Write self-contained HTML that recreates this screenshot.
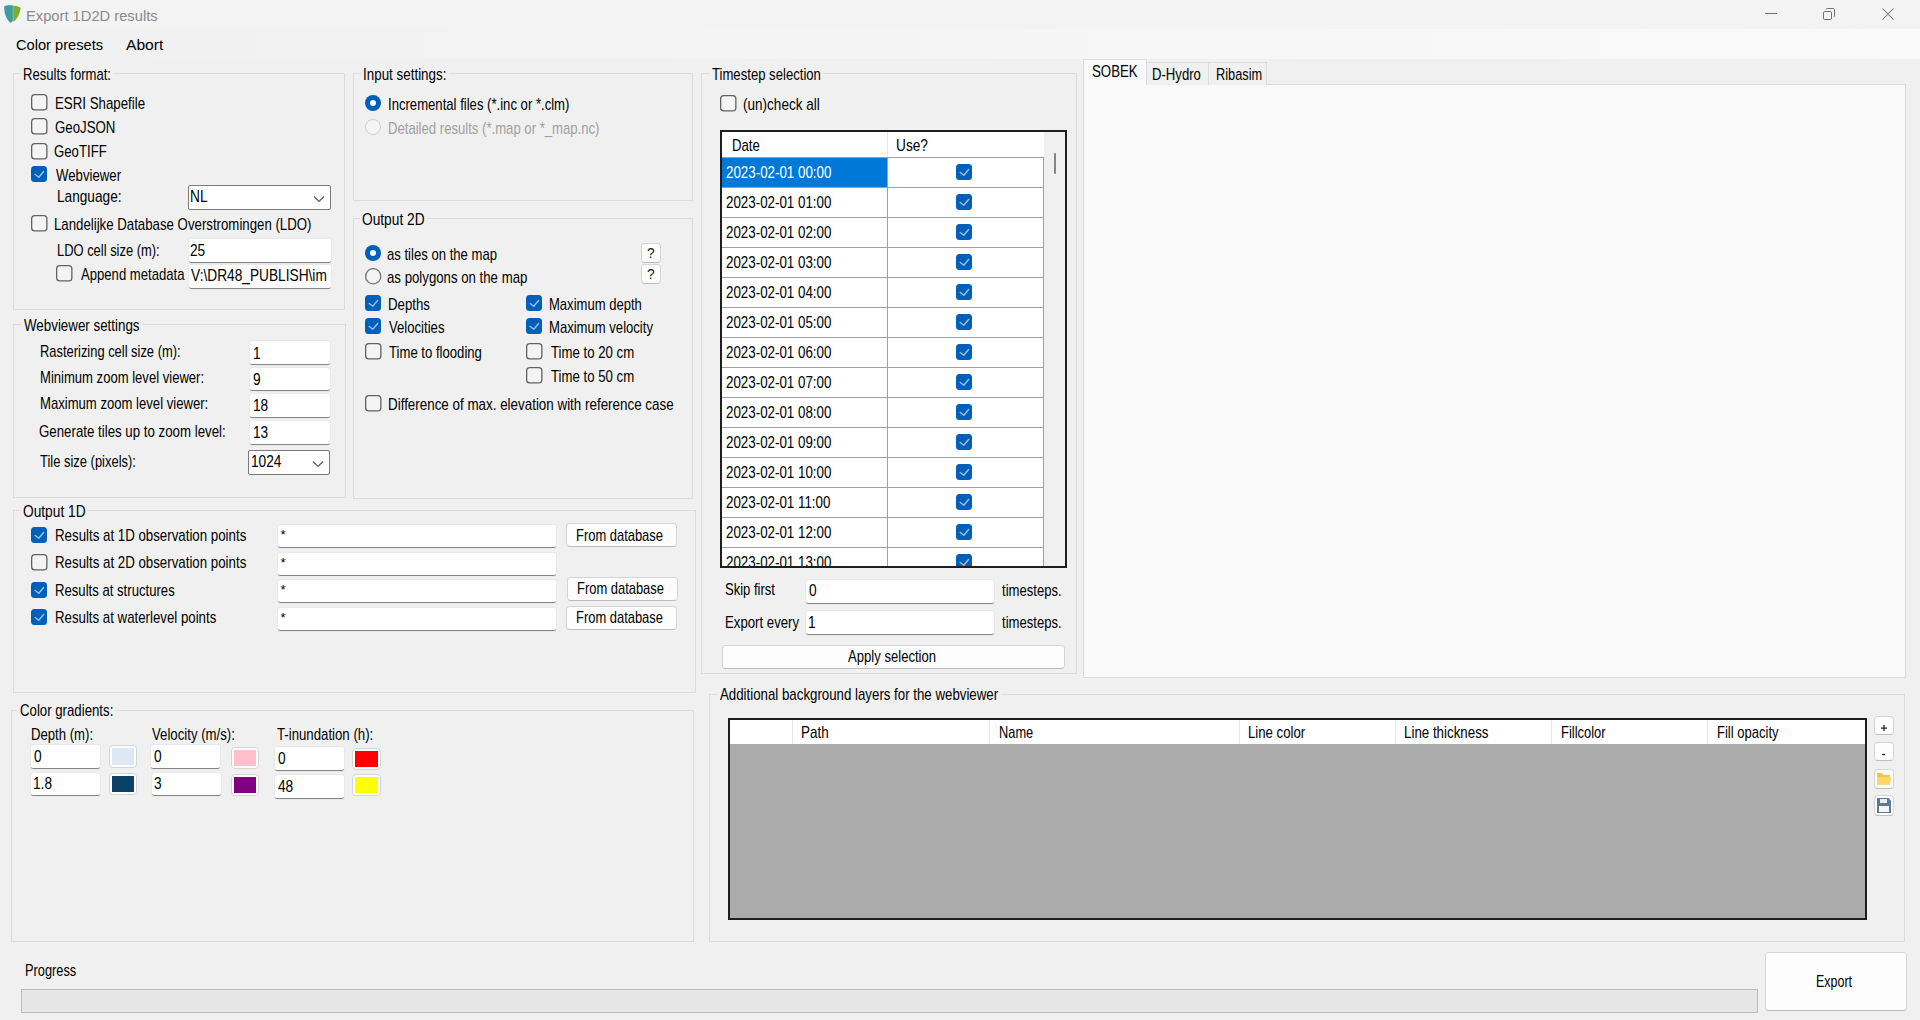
<!DOCTYPE html>
<html><head><meta charset="utf-8"><title>Export 1D2D results</title>
<style>
html,body{margin:0;padding:0;width:1920px;height:1020px;overflow:hidden;background:#f0f0f0;font-family:"Liberation Sans",sans-serif;}
div,svg{position:absolute;}
.t{font-size:15.75px;line-height:17px;white-space:pre;transform-origin:0 0;color:#000;}
</style></head><body>
<div style="left:0px;top:0px;width:1920px;height:29px;background:#f3f3f3"></div>
<div style="left:0px;top:29px;width:1920px;height:30px;background:linear-gradient(to right,#f0f0f0,#fafafa)"></div>
<svg width="20" height="20" viewBox="0 0 20 20" style="position:absolute;left:2px;top:4px">
<path d="M2.2 2.2 C4.5 1.4 8 1.2 10.9 1.5 L10.9 16.5 C10.4 17.6 9.4 18.8 8.5 18.8 C7.5 18.4 4.5 14.5 3.2 10.5 C2.4 8 2.1 4.5 2.2 2.2 Z" fill="#3f9c9e"/>
<path d="M11.2 1.5 C13.8 1.8 16.6 2.5 18.6 3.8 C18.4 7.5 16.8 12 13.6 16 C12.8 17 11.8 17.6 11.2 17.4 Z" fill="#7aae2c"/>
</svg>
<div class="t" style="left:26.35px;top:6.50px;font-size:15.5px;color:#8a8a8a;transform:scaleX(0.9489);">Export 1D2D results</div>
<div style="left:1765px;top:13px;width:12px;height:1px;background:#707070"></div>
<svg width="16" height="16" viewBox="0 0 16 16" style="position:absolute;left:1821px;top:6px">
<rect x="2.5" y="5.5" width="8" height="8" rx="1.3" fill="none" stroke="#707070" stroke-width="1"/>
<path d="M5 3.2 C5.2 2.8 5.6 2.5 6.2 2.5 L12 2.5 C12.9 2.5 13.5 3.1 13.5 4 L13.5 9.8 C13.5 10.4 13.2 10.8 12.8 11" fill="none" stroke="#707070" stroke-width="1"/>
</svg>
<svg width="16" height="16" viewBox="0 0 16 16" style="position:absolute;left:1880px;top:6px">
<path d="M2.5 2.5 L13.5 13.5 M13.5 2.5 L2.5 13.5" stroke="#707070" stroke-width="1.05"/>
</svg>
<div class="t" style="left:15.72px;top:35.50px;font-size:15px;color:#000;transform:scaleX(0.9761);">Color presets</div>
<div class="t" style="left:126.25px;top:35.50px;font-size:15px;color:#000;transform:scaleX(1.0417);">Abort</div>
<div style="left:13px;top:73px;width:332px;height:237px;border:1px solid #dcdcdc;box-sizing:border-box"></div>
<div style="left:21px;top:72px;width:92px;height:3px;background:#f0f0f0"></div>
<div class="t" style="left:23.17px;top:65.50px;font-size:15.75px;color:#000;transform:scaleX(0.8308);">Results format:</div>
<svg width="17" height="17" viewBox="0 0 17 17" style="left:31px;top:94px"><rect x="0.65" y="0.65" width="15.2" height="15.2" rx="3.2" fill="#f4f4f4" stroke="#616161" stroke-width="1.3"/></svg>
<div class="t" style="left:54.66px;top:94.50px;font-size:15.75px;color:#000;transform:scaleX(0.8429);">ESRI Shapefile</div>
<svg width="17" height="17" viewBox="0 0 17 17" style="left:31px;top:118px"><rect x="0.65" y="0.65" width="15.2" height="15.2" rx="3.2" fill="#f4f4f4" stroke="#616161" stroke-width="1.3"/></svg>
<div class="t" style="left:54.66px;top:118.50px;font-size:15.75px;color:#000;transform:scaleX(0.8414);">GeoJSON</div>
<svg width="17" height="17" viewBox="0 0 17 17" style="left:31px;top:142.5px"><rect x="0.65" y="0.65" width="15.2" height="15.2" rx="3.2" fill="#f4f4f4" stroke="#616161" stroke-width="1.3"/></svg>
<div class="t" style="left:54.16px;top:143.00px;font-size:15.75px;color:#000;transform:scaleX(0.8379);">GeoTIFF</div>
<div style="left:31px;top:166px;width:16px;height:16px;border-radius:3.5px;background:#005fb8"><svg width="16" height="16" viewBox="0 0 16 16" style="position:absolute;left:0;top:0"><path d="M4.2 8.5 L7.8 11.3 L12.6 5.5" fill="none" stroke="#9cbde6" stroke-width="1.45" stroke-linecap="round" stroke-linejoin="round"/></svg></div>
<div class="t" style="left:55.50px;top:166.50px;font-size:15.75px;color:#000;transform:scaleX(0.8379);">Webviewer</div>
<div class="t" style="left:57.43px;top:187.50px;font-size:15.75px;color:#000;transform:scaleX(0.8667);">Language:</div>
<div style="left:188px;top:185px;width:143px;height:25px;background:#fff;border:1px solid #7a7a7a;border-radius:2px;box-sizing:border-box"><svg width="12" height="8" viewBox="0 0 12 8" style="position:absolute;right:5px;top:9px"><path d="M1 1.5 L6 6.5 L11 1.5" fill="none" stroke="#555" stroke-width="1.1"/></svg></div>
<div class="t" style="left:190.13px;top:187.50px;font-size:15.75px;color:#000;transform:scaleX(0.8700);">NL</div>
<svg width="17" height="17" viewBox="0 0 17 17" style="left:31px;top:215px"><rect x="0.65" y="0.65" width="15.2" height="15.2" rx="3.2" fill="#f4f4f4" stroke="#616161" stroke-width="1.3"/></svg>
<div class="t" style="left:54.46px;top:215.50px;font-size:15.75px;color:#000;transform:scaleX(0.8403);">Landelijke Database Overstromingen (LDO)</div>
<div class="t" style="left:57.48px;top:241.50px;font-size:15.75px;color:#000;transform:scaleX(0.8203);">LDO cell size (m):</div>
<div style="left:189px;top:239px;width:142px;height:24px;background:#fff;border-radius:2.5px;border-bottom:1px solid #868686;box-sizing:border-box;box-shadow:0 0 0 1px #e9e9e9"></div>
<div class="t" style="left:190.13px;top:241.50px;font-size:15.75px;color:#000;transform:scaleX(0.8700);">25</div>
<svg width="17" height="17" viewBox="0 0 17 17" style="left:56px;top:265px"><rect x="0.65" y="0.65" width="15.2" height="15.2" rx="3.2" fill="#f4f4f4" stroke="#616161" stroke-width="1.3"/></svg>
<div class="t" style="left:80.70px;top:265.50px;font-size:15.75px;color:#000;transform:scaleX(0.8323);">Append metadata</div>
<div style="left:189px;top:265px;width:142px;height:24px;background:#fff;border-radius:2.5px;border-bottom:1px solid #868686;box-sizing:border-box;box-shadow:0 0 0 1px #e9e9e9"></div>
<div class="t" style="left:190.60px;top:266.50px;font-size:15.75px;color:#000;transform:scaleX(0.8700);">V:\DR48_PUBLISH\im</div>
<div style="left:353px;top:73px;width:340px;height:128px;border:1px solid #dcdcdc;box-sizing:border-box"></div>
<div style="left:361px;top:72px;width:88px;height:3px;background:#f0f0f0"></div>
<div class="t" style="left:363.35px;top:65.50px;font-size:15.75px;color:#000;transform:scaleX(0.8510);">Input settings:</div>
<div style="left:365px;top:95px;width:16px;height:16px;border-radius:50%;background:#005fb8"><div style="left:5px;top:5px;width:6px;height:6px;border-radius:50%;background:#fff"></div></div>
<div class="t" style="left:388.07px;top:95.50px;font-size:15.75px;color:#000;transform:scaleX(0.8324);">Incremental files (*.inc or *.clm)</div>
<div style="left:365px;top:119px;width:16px;height:16px;border-radius:50%;border:1px solid #cfcfcf;box-sizing:border-box;background:#f5f5f5"></div>
<div class="t" style="left:388.07px;top:119.50px;font-size:15.75px;color:#a0a0a0;transform:scaleX(0.8329);">Detailed results (*.map or *_map.nc)</div>
<div style="left:353px;top:218px;width:340px;height:281px;border:1px solid #dcdcdc;box-sizing:border-box"></div>
<div style="left:360px;top:217px;width:67px;height:3px;background:#f0f0f0"></div>
<div class="t" style="left:362.13px;top:210.50px;font-size:15.75px;color:#000;transform:scaleX(0.8714);">Output 2D</div>
<div style="left:365px;top:245px;width:16px;height:16px;border-radius:50%;background:#005fb8"><div style="left:5px;top:5px;width:6px;height:6px;border-radius:50%;background:#fff"></div></div>
<div class="t" style="left:387.37px;top:245.50px;font-size:15.75px;color:#000;transform:scaleX(0.8321);">as tiles on the map</div>
<svg width="17" height="17" viewBox="0 0 17 17" style="left:365px;top:268px"><circle cx="8.25" cy="8.25" r="7.6" fill="#f4f4f4" stroke="#747474" stroke-width="1.35"/></svg>
<div class="t" style="left:387.36px;top:268.50px;font-size:15.75px;color:#000;transform:scaleX(0.8392);">as polygons on the map</div>
<div style="left:641px;top:243px;width:20px;height:20px;background:#fdfdfd;border:1px solid #d5d5d5;border-bottom-color:#bdbdbd;border-radius:4px;box-sizing:border-box"></div>
<div class="t" style="left:646.55px;top:244.50px;font-size:14.5px;color:#1a1a1a;transform:scaleX(0.9500);">?</div>
<div style="left:641px;top:264px;width:20px;height:20px;background:#fdfdfd;border:1px solid #d5d5d5;border-bottom-color:#bdbdbd;border-radius:4px;box-sizing:border-box"></div>
<div class="t" style="left:646.55px;top:265.50px;font-size:14.5px;color:#1a1a1a;transform:scaleX(0.9500);">?</div>
<div style="left:365px;top:295px;width:16px;height:16px;border-radius:3.5px;background:#005fb8"><svg width="16" height="16" viewBox="0 0 16 16" style="position:absolute;left:0;top:0"><path d="M4.2 8.5 L7.8 11.3 L12.6 5.5" fill="none" stroke="#9cbde6" stroke-width="1.45" stroke-linecap="round" stroke-linejoin="round"/></svg></div>
<div class="t" style="left:388.26px;top:295.50px;font-size:15.75px;color:#000;transform:scaleX(0.8388);">Depths</div>
<div style="left:365px;top:318px;width:16px;height:16px;border-radius:3.5px;background:#005fb8"><svg width="16" height="16" viewBox="0 0 16 16" style="position:absolute;left:0;top:0"><path d="M4.2 8.5 L7.8 11.3 L12.6 5.5" fill="none" stroke="#9cbde6" stroke-width="1.45" stroke-linecap="round" stroke-linejoin="round"/></svg></div>
<div class="t" style="left:389.10px;top:318.50px;font-size:15.75px;color:#000;transform:scaleX(0.8333);">Velocities</div>
<svg width="17" height="17" viewBox="0 0 17 17" style="left:365px;top:343px"><rect x="0.65" y="0.65" width="15.2" height="15.2" rx="3.2" fill="#f4f4f4" stroke="#616161" stroke-width="1.3"/></svg>
<div class="t" style="left:389.10px;top:343.50px;font-size:15.75px;color:#000;transform:scaleX(0.8333);">Time to flooding</div>
<div style="left:526px;top:295px;width:16px;height:16px;border-radius:3.5px;background:#005fb8"><svg width="16" height="16" viewBox="0 0 16 16" style="position:absolute;left:0;top:0"><path d="M4.2 8.5 L7.8 11.3 L12.6 5.5" fill="none" stroke="#9cbde6" stroke-width="1.45" stroke-linecap="round" stroke-linejoin="round"/></svg></div>
<div class="t" style="left:549.47px;top:295.50px;font-size:15.75px;color:#000;transform:scaleX(0.8282);">Maximum depth</div>
<div style="left:526px;top:318px;width:16px;height:16px;border-radius:3.5px;background:#005fb8"><svg width="16" height="16" viewBox="0 0 16 16" style="position:absolute;left:0;top:0"><path d="M4.2 8.5 L7.8 11.3 L12.6 5.5" fill="none" stroke="#9cbde6" stroke-width="1.45" stroke-linecap="round" stroke-linejoin="round"/></svg></div>
<div class="t" style="left:549.47px;top:318.50px;font-size:15.75px;color:#000;transform:scaleX(0.8306);">Maximum velocity</div>
<svg width="17" height="17" viewBox="0 0 17 17" style="left:526px;top:343px"><rect x="0.65" y="0.65" width="15.2" height="15.2" rx="3.2" fill="#f4f4f4" stroke="#616161" stroke-width="1.3"/></svg>
<div class="t" style="left:550.80px;top:343.50px;font-size:15.75px;color:#000;transform:scaleX(0.8388);">Time to 20 cm</div>
<svg width="17" height="17" viewBox="0 0 17 17" style="left:526px;top:367px"><rect x="0.65" y="0.65" width="15.2" height="15.2" rx="3.2" fill="#f4f4f4" stroke="#616161" stroke-width="1.3"/></svg>
<div class="t" style="left:550.80px;top:367.50px;font-size:15.75px;color:#000;transform:scaleX(0.8388);">Time to 50 cm</div>
<svg width="17" height="17" viewBox="0 0 17 17" style="left:365px;top:395px"><rect x="0.65" y="0.65" width="15.2" height="15.2" rx="3.2" fill="#f4f4f4" stroke="#616161" stroke-width="1.3"/></svg>
<div class="t" style="left:388.15px;top:395.50px;font-size:15.75px;color:#000;transform:scaleX(0.8503);">Difference of max. elevation with reference case</div>
<div style="left:13px;top:324px;width:333px;height:174px;border:1px solid #dcdcdc;box-sizing:border-box"></div>
<div style="left:21px;top:323px;width:121px;height:3px;background:#f0f0f0"></div>
<div class="t" style="left:24.00px;top:316.50px;font-size:15.75px;color:#000;transform:scaleX(0.8478);">Webviewer settings</div>
<div class="t" style="left:39.68px;top:342.50px;font-size:15.75px;color:#000;transform:scaleX(0.8195);">Rasterizing cell size (m):</div>
<div class="t" style="left:39.67px;top:368.50px;font-size:15.75px;color:#000;transform:scaleX(0.8296);">Minimum zoom level viewer:</div>
<div class="t" style="left:39.67px;top:394.50px;font-size:15.75px;color:#000;transform:scaleX(0.8320);">Maximum zoom level viewer:</div>
<div class="t" style="left:38.96px;top:422.50px;font-size:15.75px;color:#000;transform:scaleX(0.8429);">Generate tiles up to zoom level:</div>
<div class="t" style="left:40.10px;top:452.50px;font-size:15.75px;color:#000;transform:scaleX(0.8217);">Tile size (pixels):</div>
<div style="left:250px;top:341px;width:80px;height:24px;background:#fff;border-radius:2.5px;border-bottom:1px solid #868686;box-sizing:border-box;box-shadow:0 0 0 1px #e9e9e9"></div>
<div class="t" style="left:252.63px;top:344.50px;font-size:15.75px;color:#000;transform:scaleX(0.8700);">1</div>
<div style="left:250px;top:368px;width:80px;height:23px;background:#fff;border-radius:2.5px;border-bottom:1px solid #868686;box-sizing:border-box;box-shadow:0 0 0 1px #e9e9e9"></div>
<div class="t" style="left:252.63px;top:370.50px;font-size:15.75px;color:#000;transform:scaleX(0.8700);">9</div>
<div style="left:250px;top:394px;width:80px;height:24px;background:#fff;border-radius:2.5px;border-bottom:1px solid #868686;box-sizing:border-box;box-shadow:0 0 0 1px #e9e9e9"></div>
<div class="t" style="left:252.63px;top:396.50px;font-size:15.75px;color:#000;transform:scaleX(0.8700);">18</div>
<div style="left:250px;top:421px;width:80px;height:24px;background:#fff;border-radius:2.5px;border-bottom:1px solid #868686;box-sizing:border-box;box-shadow:0 0 0 1px #e9e9e9"></div>
<div class="t" style="left:252.63px;top:423.50px;font-size:15.75px;color:#000;transform:scaleX(0.8700);">13</div>
<div style="left:248px;top:450px;width:82px;height:25px;background:#fff;border:1px solid #7a7a7a;border-radius:2px;box-sizing:border-box"><svg width="12" height="8" viewBox="0 0 12 8" style="position:absolute;right:5px;top:9px"><path d="M1 1.5 L6 6.5 L11 1.5" fill="none" stroke="#555" stroke-width="1.1"/></svg></div>
<div class="t" style="left:251.13px;top:452.50px;font-size:15.75px;color:#000;transform:scaleX(0.8700);">1024</div>
<div style="left:13px;top:510px;width:683px;height:183px;border:1px solid #dcdcdc;box-sizing:border-box"></div>
<div style="left:20px;top:509px;width:67px;height:3px;background:#f0f0f0"></div>
<div class="t" style="left:22.53px;top:502.50px;font-size:15.75px;color:#000;transform:scaleX(0.8714);">Output 1D</div>
<div style="left:31px;top:527px;width:16px;height:16px;border-radius:3.5px;background:#005fb8"><svg width="16" height="16" viewBox="0 0 16 16" style="position:absolute;left:0;top:0"><path d="M4.2 8.5 L7.8 11.3 L12.6 5.5" fill="none" stroke="#9cbde6" stroke-width="1.45" stroke-linecap="round" stroke-linejoin="round"/></svg></div>
<div class="t" style="left:54.66px;top:526.50px;font-size:15.75px;color:#000;transform:scaleX(0.8436);">Results at 1D observation points</div>
<div style="left:278px;top:525px;width:278px;height:23px;background:#fff;border-radius:2.5px;border-bottom:1px solid #868686;box-sizing:border-box;box-shadow:0 0 0 1px #e9e9e9"></div>
<div class="t" style="left:280.50px;top:525.50px;font-size:13px;color:#000;transform:scaleX(1.0000);">*</div>
<svg width="17" height="17" viewBox="0 0 17 17" style="left:31px;top:554px"><rect x="0.65" y="0.65" width="15.2" height="15.2" rx="3.2" fill="#f4f4f4" stroke="#616161" stroke-width="1.3"/></svg>
<div class="t" style="left:54.66px;top:553.50px;font-size:15.75px;color:#000;transform:scaleX(0.8436);">Results at 2D observation points</div>
<div style="left:278px;top:553px;width:278px;height:23px;background:#fff;border-radius:2.5px;border-bottom:1px solid #868686;box-sizing:border-box;box-shadow:0 0 0 1px #e9e9e9"></div>
<div class="t" style="left:280.50px;top:553.50px;font-size:13px;color:#000;transform:scaleX(1.0000);">*</div>
<div style="left:31px;top:582px;width:16px;height:16px;border-radius:3.5px;background:#005fb8"><svg width="16" height="16" viewBox="0 0 16 16" style="position:absolute;left:0;top:0"><path d="M4.2 8.5 L7.8 11.3 L12.6 5.5" fill="none" stroke="#9cbde6" stroke-width="1.45" stroke-linecap="round" stroke-linejoin="round"/></svg></div>
<div class="t" style="left:54.67px;top:581.50px;font-size:15.75px;color:#000;transform:scaleX(0.8338);">Results at structures</div>
<div style="left:278px;top:580px;width:278px;height:23px;background:#fff;border-radius:2.5px;border-bottom:1px solid #868686;box-sizing:border-box;box-shadow:0 0 0 1px #e9e9e9"></div>
<div class="t" style="left:280.50px;top:580.50px;font-size:13px;color:#000;transform:scaleX(1.0000);">*</div>
<div style="left:31px;top:609px;width:16px;height:16px;border-radius:3.5px;background:#005fb8"><svg width="16" height="16" viewBox="0 0 16 16" style="position:absolute;left:0;top:0"><path d="M4.2 8.5 L7.8 11.3 L12.6 5.5" fill="none" stroke="#9cbde6" stroke-width="1.45" stroke-linecap="round" stroke-linejoin="round"/></svg></div>
<div class="t" style="left:54.66px;top:608.50px;font-size:15.75px;color:#000;transform:scaleX(0.8411);">Results at waterlevel points</div>
<div style="left:278px;top:608px;width:278px;height:23px;background:#fff;border-radius:2.5px;border-bottom:1px solid #868686;box-sizing:border-box;box-shadow:0 0 0 1px #e9e9e9"></div>
<div class="t" style="left:280.50px;top:608.50px;font-size:13px;color:#000;transform:scaleX(1.0000);">*</div>
<div style="left:566px;top:523px;width:111px;height:24px;background:#fdfdfd;border:1px solid #d5d5d5;border-bottom-color:#bdbdbd;border-radius:4px;box-sizing:border-box"></div>
<div class="t" style="left:576.08px;top:526.50px;font-size:15.75px;color:#000;transform:scaleX(0.8210);">From database</div>
<div style="left:567px;top:577px;width:111px;height:24px;background:#fdfdfd;border:1px solid #d5d5d5;border-bottom-color:#bdbdbd;border-radius:4px;box-sizing:border-box"></div>
<div class="t" style="left:577.08px;top:579.50px;font-size:15.75px;color:#000;transform:scaleX(0.8210);">From database</div>
<div style="left:566px;top:606px;width:111px;height:24px;background:#fdfdfd;border:1px solid #d5d5d5;border-bottom-color:#bdbdbd;border-radius:4px;box-sizing:border-box"></div>
<div class="t" style="left:576.08px;top:608.50px;font-size:15.75px;color:#000;transform:scaleX(0.8210);">From database</div>
<div style="left:11px;top:710px;width:683px;height:232px;border:1px solid #dcdcdc;box-sizing:border-box"></div>
<div style="left:17px;top:709px;width:98px;height:3px;background:#f0f0f0"></div>
<div class="t" style="left:19.56px;top:701.50px;font-size:15.75px;color:#000;transform:scaleX(0.8394);">Color gradients:</div>
<div class="t" style="left:31.07px;top:725.50px;font-size:15.75px;color:#000;transform:scaleX(0.8347);">Depth (m):</div>
<div class="t" style="left:151.90px;top:725.50px;font-size:15.75px;color:#000;transform:scaleX(0.8378);">Velocity (m/s):</div>
<div class="t" style="left:277.00px;top:725.50px;font-size:15.75px;color:#000;transform:scaleX(0.8389);">T-inundation (h):</div>
<div style="left:31px;top:745px;width:69px;height:24px;background:#fff;border-radius:2.5px;border-bottom:1px solid #868686;box-sizing:border-box;box-shadow:0 0 0 1px #e9e9e9"></div>
<div class="t" style="left:34.00px;top:747.50px;font-size:15.75px;color:#000;transform:scaleX(0.8700);">0</div>
<div style="left:31px;top:773px;width:69px;height:23px;background:#fff;border-radius:2.5px;border-bottom:1px solid #868686;box-sizing:border-box;box-shadow:0 0 0 1px #e9e9e9"></div>
<div class="t" style="left:33.13px;top:774.50px;font-size:15.75px;color:#000;transform:scaleX(0.8700);">1.8</div>
<div style="left:151px;top:745px;width:69px;height:24px;background:#fff;border-radius:2.5px;border-bottom:1px solid #868686;box-sizing:border-box;box-shadow:0 0 0 1px #e9e9e9"></div>
<div class="t" style="left:154.00px;top:747.50px;font-size:15.75px;color:#000;transform:scaleX(0.8700);">0</div>
<div style="left:152px;top:773px;width:69px;height:23px;background:#fff;border-radius:2.5px;border-bottom:1px solid #868686;box-sizing:border-box;box-shadow:0 0 0 1px #e9e9e9"></div>
<div class="t" style="left:154.13px;top:774.50px;font-size:15.75px;color:#000;transform:scaleX(0.8700);">3</div>
<div style="left:275px;top:747px;width:69px;height:24px;background:#fff;border-radius:2.5px;border-bottom:1px solid #868686;box-sizing:border-box;box-shadow:0 0 0 1px #e9e9e9"></div>
<div class="t" style="left:278.00px;top:749.50px;font-size:15.75px;color:#000;transform:scaleX(0.8700);">0</div>
<div style="left:275px;top:775px;width:69px;height:24px;background:#fff;border-radius:2.5px;border-bottom:1px solid #868686;box-sizing:border-box;box-shadow:0 0 0 1px #e9e9e9"></div>
<div class="t" style="left:278.00px;top:777.50px;font-size:15.75px;color:#000;transform:scaleX(0.8700);">48</div>
<div style="left:109px;top:745px;width:28px;height:23px;background:#fdfdfd;border:1px solid #d5d5d5;border-radius:4px;box-sizing:border-box"><div style="left:2px;top:2px;right:2px;bottom:2px;background:#dce8f4"></div></div>
<div style="left:109px;top:773px;width:28px;height:22px;background:#fdfdfd;border:1px solid #d5d5d5;border-radius:4px;box-sizing:border-box"><div style="left:2px;top:2px;right:2px;bottom:2px;background:#0b4168"></div></div>
<div style="left:231px;top:747px;width:28px;height:22px;background:#fdfdfd;border:1px solid #d5d5d5;border-radius:4px;box-sizing:border-box"><div style="left:2px;top:2px;right:2px;bottom:2px;background:#ffc0cb"></div></div>
<div style="left:231px;top:774px;width:28px;height:22px;background:#fdfdfd;border:1px solid #d5d5d5;border-radius:4px;box-sizing:border-box"><div style="left:2px;top:2px;right:2px;bottom:2px;background:#800080"></div></div>
<div style="left:352px;top:748px;width:29px;height:22px;background:#fdfdfd;border:1px solid #d5d5d5;border-radius:4px;box-sizing:border-box"><div style="left:2px;top:2px;right:2px;bottom:2px;background:#ff0000"></div></div>
<div style="left:352px;top:774px;width:29px;height:22px;background:#fdfdfd;border:1px solid #d5d5d5;border-radius:4px;box-sizing:border-box"><div style="left:2px;top:2px;right:2px;bottom:2px;background:#ffff00"></div></div>
<div style="left:701px;top:73px;width:376px;height:601px;border:1px solid #dcdcdc;box-sizing:border-box"></div>
<div style="left:709px;top:72px;width:114px;height:3px;background:#f0f0f0"></div>
<div class="t" style="left:711.70px;top:65.50px;font-size:15.75px;color:#000;transform:scaleX(0.8331);">Timestep selection</div>
<svg width="17" height="17" viewBox="0 0 17 17" style="left:720px;top:95px"><rect x="0.65" y="0.65" width="15.2" height="15.2" rx="3.2" fill="#f4f4f4" stroke="#616161" stroke-width="1.3"/></svg>
<div class="t" style="left:743.34px;top:95.50px;font-size:15.75px;color:#000;transform:scaleX(0.8598);">(un)check all</div>
<div style="left:720px;top:130px;width:347px;height:438px;border:2px solid #1e1e1e;box-sizing:border-box;background:#fff;overflow:hidden">
<div style="left:322px;top:0;width:21px;height:434px;background:#f0f0f0"></div>
<div style="left:332px;top:21px;width:2px;height:21px;background:#868686;border-radius:1px"></div>
<div style="left:165px;top:0;width:1px;height:25px;background:#e6e6e6"></div>
<div class="t" style="left:10.46px;top:4.50px;font-size:15.75px;color:#000;transform:scaleX(0.8375);">Date</div>
<div class="t" style="left:174.03px;top:4.50px;font-size:15.75px;color:#000;transform:scaleX(0.8686);">Use?</div>
<div style="left:0;top:25px;width:322px;height:1px;background:#a0a0a0"></div>
<div style="left:0;top:26px;width:165px;height:29px;background:#0078d7"></div>
<div style="left:165px;top:25px;width:1px;height:30px;background:#a0a0a0"></div>
<div style="left:321px;top:25px;width:1px;height:30px;background:#a0a0a0"></div>
<div class="t" style="left:4.15px;top:31.50px;font-size:15.75px;color:#fff;transform:scaleX(0.8472);">2023-02-01 00:00</div>
<div style="left:234px;top:32px;width:16px;height:16px;border-radius:3.5px;background:#005fb8"><svg width="16" height="16" viewBox="0 0 16 16" style="position:absolute;left:0;top:0"><path d="M4.2 8.5 L7.8 11.3 L12.6 5.5" fill="none" stroke="#9cbde6" stroke-width="1.45" stroke-linecap="round" stroke-linejoin="round"/></svg></div>
<div style="left:0;top:55px;width:322px;height:1px;background:#a0a0a0"></div>
<div style="left:165px;top:55px;width:1px;height:30px;background:#a0a0a0"></div>
<div style="left:321px;top:55px;width:1px;height:30px;background:#a0a0a0"></div>
<div class="t" style="left:4.15px;top:61.50px;font-size:15.75px;color:#000;transform:scaleX(0.8472);">2023-02-01 01:00</div>
<div style="left:234px;top:62px;width:16px;height:16px;border-radius:3.5px;background:#005fb8"><svg width="16" height="16" viewBox="0 0 16 16" style="position:absolute;left:0;top:0"><path d="M4.2 8.5 L7.8 11.3 L12.6 5.5" fill="none" stroke="#9cbde6" stroke-width="1.45" stroke-linecap="round" stroke-linejoin="round"/></svg></div>
<div style="left:0;top:85px;width:322px;height:1px;background:#a0a0a0"></div>
<div style="left:165px;top:85px;width:1px;height:30px;background:#a0a0a0"></div>
<div style="left:321px;top:85px;width:1px;height:30px;background:#a0a0a0"></div>
<div class="t" style="left:4.15px;top:91.50px;font-size:15.75px;color:#000;transform:scaleX(0.8472);">2023-02-01 02:00</div>
<div style="left:234px;top:92px;width:16px;height:16px;border-radius:3.5px;background:#005fb8"><svg width="16" height="16" viewBox="0 0 16 16" style="position:absolute;left:0;top:0"><path d="M4.2 8.5 L7.8 11.3 L12.6 5.5" fill="none" stroke="#9cbde6" stroke-width="1.45" stroke-linecap="round" stroke-linejoin="round"/></svg></div>
<div style="left:0;top:115px;width:322px;height:1px;background:#a0a0a0"></div>
<div style="left:165px;top:115px;width:1px;height:30px;background:#a0a0a0"></div>
<div style="left:321px;top:115px;width:1px;height:30px;background:#a0a0a0"></div>
<div class="t" style="left:4.15px;top:121.50px;font-size:15.75px;color:#000;transform:scaleX(0.8472);">2023-02-01 03:00</div>
<div style="left:234px;top:122px;width:16px;height:16px;border-radius:3.5px;background:#005fb8"><svg width="16" height="16" viewBox="0 0 16 16" style="position:absolute;left:0;top:0"><path d="M4.2 8.5 L7.8 11.3 L12.6 5.5" fill="none" stroke="#9cbde6" stroke-width="1.45" stroke-linecap="round" stroke-linejoin="round"/></svg></div>
<div style="left:0;top:145px;width:322px;height:1px;background:#a0a0a0"></div>
<div style="left:165px;top:145px;width:1px;height:30px;background:#a0a0a0"></div>
<div style="left:321px;top:145px;width:1px;height:30px;background:#a0a0a0"></div>
<div class="t" style="left:4.15px;top:151.50px;font-size:15.75px;color:#000;transform:scaleX(0.8472);">2023-02-01 04:00</div>
<div style="left:234px;top:152px;width:16px;height:16px;border-radius:3.5px;background:#005fb8"><svg width="16" height="16" viewBox="0 0 16 16" style="position:absolute;left:0;top:0"><path d="M4.2 8.5 L7.8 11.3 L12.6 5.5" fill="none" stroke="#9cbde6" stroke-width="1.45" stroke-linecap="round" stroke-linejoin="round"/></svg></div>
<div style="left:0;top:175px;width:322px;height:1px;background:#a0a0a0"></div>
<div style="left:165px;top:175px;width:1px;height:30px;background:#a0a0a0"></div>
<div style="left:321px;top:175px;width:1px;height:30px;background:#a0a0a0"></div>
<div class="t" style="left:4.15px;top:181.50px;font-size:15.75px;color:#000;transform:scaleX(0.8472);">2023-02-01 05:00</div>
<div style="left:234px;top:182px;width:16px;height:16px;border-radius:3.5px;background:#005fb8"><svg width="16" height="16" viewBox="0 0 16 16" style="position:absolute;left:0;top:0"><path d="M4.2 8.5 L7.8 11.3 L12.6 5.5" fill="none" stroke="#9cbde6" stroke-width="1.45" stroke-linecap="round" stroke-linejoin="round"/></svg></div>
<div style="left:0;top:205px;width:322px;height:1px;background:#a0a0a0"></div>
<div style="left:165px;top:205px;width:1px;height:30px;background:#a0a0a0"></div>
<div style="left:321px;top:205px;width:1px;height:30px;background:#a0a0a0"></div>
<div class="t" style="left:4.15px;top:211.50px;font-size:15.75px;color:#000;transform:scaleX(0.8472);">2023-02-01 06:00</div>
<div style="left:234px;top:212px;width:16px;height:16px;border-radius:3.5px;background:#005fb8"><svg width="16" height="16" viewBox="0 0 16 16" style="position:absolute;left:0;top:0"><path d="M4.2 8.5 L7.8 11.3 L12.6 5.5" fill="none" stroke="#9cbde6" stroke-width="1.45" stroke-linecap="round" stroke-linejoin="round"/></svg></div>
<div style="left:0;top:235px;width:322px;height:1px;background:#a0a0a0"></div>
<div style="left:165px;top:235px;width:1px;height:30px;background:#a0a0a0"></div>
<div style="left:321px;top:235px;width:1px;height:30px;background:#a0a0a0"></div>
<div class="t" style="left:4.15px;top:241.50px;font-size:15.75px;color:#000;transform:scaleX(0.8472);">2023-02-01 07:00</div>
<div style="left:234px;top:242px;width:16px;height:16px;border-radius:3.5px;background:#005fb8"><svg width="16" height="16" viewBox="0 0 16 16" style="position:absolute;left:0;top:0"><path d="M4.2 8.5 L7.8 11.3 L12.6 5.5" fill="none" stroke="#9cbde6" stroke-width="1.45" stroke-linecap="round" stroke-linejoin="round"/></svg></div>
<div style="left:0;top:265px;width:322px;height:1px;background:#a0a0a0"></div>
<div style="left:165px;top:265px;width:1px;height:30px;background:#a0a0a0"></div>
<div style="left:321px;top:265px;width:1px;height:30px;background:#a0a0a0"></div>
<div class="t" style="left:4.15px;top:271.50px;font-size:15.75px;color:#000;transform:scaleX(0.8472);">2023-02-01 08:00</div>
<div style="left:234px;top:272px;width:16px;height:16px;border-radius:3.5px;background:#005fb8"><svg width="16" height="16" viewBox="0 0 16 16" style="position:absolute;left:0;top:0"><path d="M4.2 8.5 L7.8 11.3 L12.6 5.5" fill="none" stroke="#9cbde6" stroke-width="1.45" stroke-linecap="round" stroke-linejoin="round"/></svg></div>
<div style="left:0;top:295px;width:322px;height:1px;background:#a0a0a0"></div>
<div style="left:165px;top:295px;width:1px;height:30px;background:#a0a0a0"></div>
<div style="left:321px;top:295px;width:1px;height:30px;background:#a0a0a0"></div>
<div class="t" style="left:4.15px;top:301.50px;font-size:15.75px;color:#000;transform:scaleX(0.8472);">2023-02-01 09:00</div>
<div style="left:234px;top:302px;width:16px;height:16px;border-radius:3.5px;background:#005fb8"><svg width="16" height="16" viewBox="0 0 16 16" style="position:absolute;left:0;top:0"><path d="M4.2 8.5 L7.8 11.3 L12.6 5.5" fill="none" stroke="#9cbde6" stroke-width="1.45" stroke-linecap="round" stroke-linejoin="round"/></svg></div>
<div style="left:0;top:325px;width:322px;height:1px;background:#a0a0a0"></div>
<div style="left:165px;top:325px;width:1px;height:30px;background:#a0a0a0"></div>
<div style="left:321px;top:325px;width:1px;height:30px;background:#a0a0a0"></div>
<div class="t" style="left:4.15px;top:331.50px;font-size:15.75px;color:#000;transform:scaleX(0.8472);">2023-02-01 10:00</div>
<div style="left:234px;top:332px;width:16px;height:16px;border-radius:3.5px;background:#005fb8"><svg width="16" height="16" viewBox="0 0 16 16" style="position:absolute;left:0;top:0"><path d="M4.2 8.5 L7.8 11.3 L12.6 5.5" fill="none" stroke="#9cbde6" stroke-width="1.45" stroke-linecap="round" stroke-linejoin="round"/></svg></div>
<div style="left:0;top:355px;width:322px;height:1px;background:#a0a0a0"></div>
<div style="left:165px;top:355px;width:1px;height:30px;background:#a0a0a0"></div>
<div style="left:321px;top:355px;width:1px;height:30px;background:#a0a0a0"></div>
<div class="t" style="left:4.15px;top:361.50px;font-size:15.75px;color:#000;transform:scaleX(0.8472);">2023-02-01 11:00</div>
<div style="left:234px;top:362px;width:16px;height:16px;border-radius:3.5px;background:#005fb8"><svg width="16" height="16" viewBox="0 0 16 16" style="position:absolute;left:0;top:0"><path d="M4.2 8.5 L7.8 11.3 L12.6 5.5" fill="none" stroke="#9cbde6" stroke-width="1.45" stroke-linecap="round" stroke-linejoin="round"/></svg></div>
<div style="left:0;top:385px;width:322px;height:1px;background:#a0a0a0"></div>
<div style="left:165px;top:385px;width:1px;height:30px;background:#a0a0a0"></div>
<div style="left:321px;top:385px;width:1px;height:30px;background:#a0a0a0"></div>
<div class="t" style="left:4.15px;top:391.50px;font-size:15.75px;color:#000;transform:scaleX(0.8472);">2023-02-01 12:00</div>
<div style="left:234px;top:392px;width:16px;height:16px;border-radius:3.5px;background:#005fb8"><svg width="16" height="16" viewBox="0 0 16 16" style="position:absolute;left:0;top:0"><path d="M4.2 8.5 L7.8 11.3 L12.6 5.5" fill="none" stroke="#9cbde6" stroke-width="1.45" stroke-linecap="round" stroke-linejoin="round"/></svg></div>
<div style="left:0;top:415px;width:322px;height:1px;background:#a0a0a0"></div>
<div style="left:165px;top:415px;width:1px;height:30px;background:#a0a0a0"></div>
<div style="left:321px;top:415px;width:1px;height:30px;background:#a0a0a0"></div>
<div class="t" style="left:4.15px;top:421.50px;font-size:15.75px;color:#000;transform:scaleX(0.8472);">2023-02-01 13:00</div>
<div style="left:234px;top:422px;width:16px;height:16px;border-radius:3.5px;background:#005fb8"><svg width="16" height="16" viewBox="0 0 16 16" style="position:absolute;left:0;top:0"><path d="M4.2 8.5 L7.8 11.3 L12.6 5.5" fill="none" stroke="#9cbde6" stroke-width="1.45" stroke-linecap="round" stroke-linejoin="round"/></svg></div>
<div style="left:0;top:445px;width:322px;height:1px;background:#a0a0a0"></div>
<div style="left:165px;top:445px;width:1px;height:30px;background:#a0a0a0"></div>
<div style="left:321px;top:445px;width:1px;height:30px;background:#a0a0a0"></div>
<div class="t" style="left:4.15px;top:451.50px;font-size:15.75px;color:#000;transform:scaleX(0.8472);">2023-02-01 14:00</div>
<div style="left:234px;top:452px;width:16px;height:16px;border-radius:3.5px;background:#005fb8"><svg width="16" height="16" viewBox="0 0 16 16" style="position:absolute;left:0;top:0"><path d="M4.2 8.5 L7.8 11.3 L12.6 5.5" fill="none" stroke="#9cbde6" stroke-width="1.45" stroke-linecap="round" stroke-linejoin="round"/></svg></div>
</div>
<div class="t" style="left:725.47px;top:581.00px;font-size:15.75px;color:#000;transform:scaleX(0.8271);">Skip first</div>
<div style="left:806px;top:580px;width:188px;height:24px;background:#fff;border-radius:2.5px;border-bottom:1px solid #868686;box-sizing:border-box;box-shadow:0 0 0 1px #e9e9e9"></div>
<div class="t" style="left:809.00px;top:581.50px;font-size:15.75px;color:#000;transform:scaleX(0.8700);">0</div>
<div class="t" style="left:1001.60px;top:581.50px;font-size:15.75px;color:#000;transform:scaleX(0.8310);">timesteps.</div>
<div class="t" style="left:725.46px;top:613.50px;font-size:15.75px;color:#000;transform:scaleX(0.8379);">Export every</div>
<div style="left:806px;top:611px;width:188px;height:24px;background:#fff;border-radius:2.5px;border-bottom:1px solid #868686;box-sizing:border-box;box-shadow:0 0 0 1px #e9e9e9"></div>
<div class="t" style="left:808.13px;top:613.50px;font-size:15.75px;color:#000;transform:scaleX(0.8700);">1</div>
<div class="t" style="left:1001.60px;top:614.00px;font-size:15.75px;color:#000;transform:scaleX(0.8310);">timesteps.</div>
<div style="left:722px;top:645px;width:343px;height:24px;background:#fdfdfd;border:1px solid #d5d5d5;border-bottom-color:#bdbdbd;border-radius:4px;box-sizing:border-box"></div>
<div class="t" style="left:847.80px;top:647.50px;font-size:15.75px;color:#000;transform:scaleX(0.8314);">Apply selection</div>
<div style="left:1083px;top:84px;width:823px;height:594px;background:#f9f9f9;border:1px solid #dcdcdc;box-sizing:border-box"></div>
<div style="left:1146px;top:62px;width:63px;height:23px;background:#f0f0f0;border:1px solid #dcdcdc;border-bottom:none;box-sizing:border-box"></div>
<div style="left:1208px;top:62px;width:59px;height:23px;background:#f0f0f0;border:1px solid #dcdcdc;border-bottom:none;box-sizing:border-box"></div>
<div style="left:1083px;top:59px;width:64px;height:26px;background:#f9f9f9;border:1px solid #dcdcdc;border-bottom:none;box-sizing:border-box"></div>
<div style="left:1084px;top:84px;width:62px;height:2px;background:#f9f9f9"></div>
<div class="t" style="left:1092.16px;top:63.00px;font-size:15.75px;color:#000;transform:scaleX(0.8415);">SOBEK</div>
<div class="t" style="left:1151.67px;top:65.50px;font-size:15.75px;color:#000;transform:scaleX(0.8333);">D-Hydro</div>
<div class="t" style="left:1215.89px;top:65.50px;font-size:15.75px;color:#000;transform:scaleX(0.8127);">Ribasim</div>
<div style="left:709px;top:694px;width:1196px;height:248px;border:1px solid #dcdcdc;box-sizing:border-box"></div>
<div style="left:717px;top:693px;width:284px;height:3px;background:#f0f0f0"></div>
<div class="t" style="left:720.30px;top:686.00px;font-size:15.75px;color:#000;transform:scaleX(0.8427);">Additional background layers for the webviewer</div>
<div style="left:728px;top:718px;width:1139px;height:202px;border:2px solid #1e1e1e;box-sizing:border-box;background:#ababab;overflow:hidden">
<div style="left:0;top:0;width:1135px;height:24px;background:#fff"></div>
<div style="left:62px;top:0;width:1px;height:24px;background:#e6e6e6"></div>
<div style="left:259px;top:0;width:1px;height:24px;background:#e6e6e6"></div>
<div style="left:509px;top:0;width:1px;height:24px;background:#e6e6e6"></div>
<div style="left:665px;top:0;width:1px;height:24px;background:#e6e6e6"></div>
<div style="left:821px;top:0;width:1px;height:24px;background:#e6e6e6"></div>
<div style="left:977px;top:0;width:1px;height:24px;background:#e6e6e6"></div>
<div class="t" style="left:70.75px;top:3.50px;font-size:15.75px;color:#000;transform:scaleX(0.8548);">Path</div>
<div class="t" style="left:268.59px;top:3.50px;font-size:15.75px;color:#000;transform:scaleX(0.8146);">Name</div>
<div class="t" style="left:518.16px;top:3.50px;font-size:15.75px;color:#000;transform:scaleX(0.8379);">Line color</div>
<div class="t" style="left:674.45px;top:3.50px;font-size:15.75px;color:#000;transform:scaleX(0.8465);">Line thickness</div>
<div class="t" style="left:830.58px;top:3.50px;font-size:15.75px;color:#000;transform:scaleX(0.8226);">Fillcolor</div>
<div class="t" style="left:986.67px;top:3.50px;font-size:15.75px;color:#000;transform:scaleX(0.8274);">Fill opacity</div>
</div>
<div style="left:1874px;top:716px;width:20px;height:19px;background:#fdfdfd;border:1px solid #d5d5d5;border-bottom-color:#bdbdbd;border-radius:4px;box-sizing:border-box"><svg width="20" height="19" viewBox="0 0 20 19" style="position:absolute;left:-1px;top:-1px"><path d="M10 9 V15 M7 12 H13" stroke="#222" stroke-width="1.25"/></svg></div>
<div style="left:1874px;top:742px;width:20px;height:19px;background:#fdfdfd;border:1px solid #d5d5d5;border-bottom-color:#bdbdbd;border-radius:4px;box-sizing:border-box"><svg width="20" height="19" viewBox="0 0 20 19" style="position:absolute;left:-1px;top:-1px"><path d="M8 12.5 H11" stroke="#222" stroke-width="1.3"/></svg></div>
<div style="left:1874px;top:769px;width:20px;height:20px;background:#fdfdfd;border:1px solid #d5d5d5;border-bottom-color:#bdbdbd;border-radius:4px;box-sizing:border-box"><svg width="20" height="20" viewBox="0 0 20 20" style="position:absolute;left:-1px;top:-1px"><path d="M3 4 L8 4 L9.5 6 L16 6 L16 15.5 L3 15.5 Z" fill="#f4c542"/><path d="M3.2 8 L17.2 8 L16 15.5 L3 15.5 Z" fill="#f9d56a"/></svg></div>
<div style="left:1874px;top:795px;width:20px;height:21px;background:#fdfdfd;border:1px solid #d5d5d5;border-bottom-color:#bdbdbd;border-radius:4px;box-sizing:border-box"><svg width="20" height="21" viewBox="0 0 20 21" style="position:absolute;left:-1px;top:-1px"><path d="M3 3 L14.5 3 L17 5.5 L17 18 L3 18 Z" fill="#5c7a93"/><rect x="6" y="4" width="7" height="4" fill="#e8edf2"/><rect x="5" y="11" width="10" height="6" fill="#f4f6f8"/></svg></div>
<div class="t" style="left:25.44px;top:961.50px;font-size:15.75px;color:#000;transform:scaleX(0.8137);">Progress</div>
<div style="left:21px;top:989px;width:1737px;height:24px;background:#e6e6e6;border:1px solid #bcbcbc;box-sizing:border-box"></div>
<div style="left:1765px;top:952px;width:142px;height:59px;background:#fdfdfd;border:1px solid #d5d5d5;border-bottom-color:#bdbdbd;border-radius:4px;box-sizing:border-box"></div>
<div class="t" style="left:1816.11px;top:972.50px;font-size:15.75px;color:#000;transform:scaleX(0.7911);">Export</div>
</body></html>
